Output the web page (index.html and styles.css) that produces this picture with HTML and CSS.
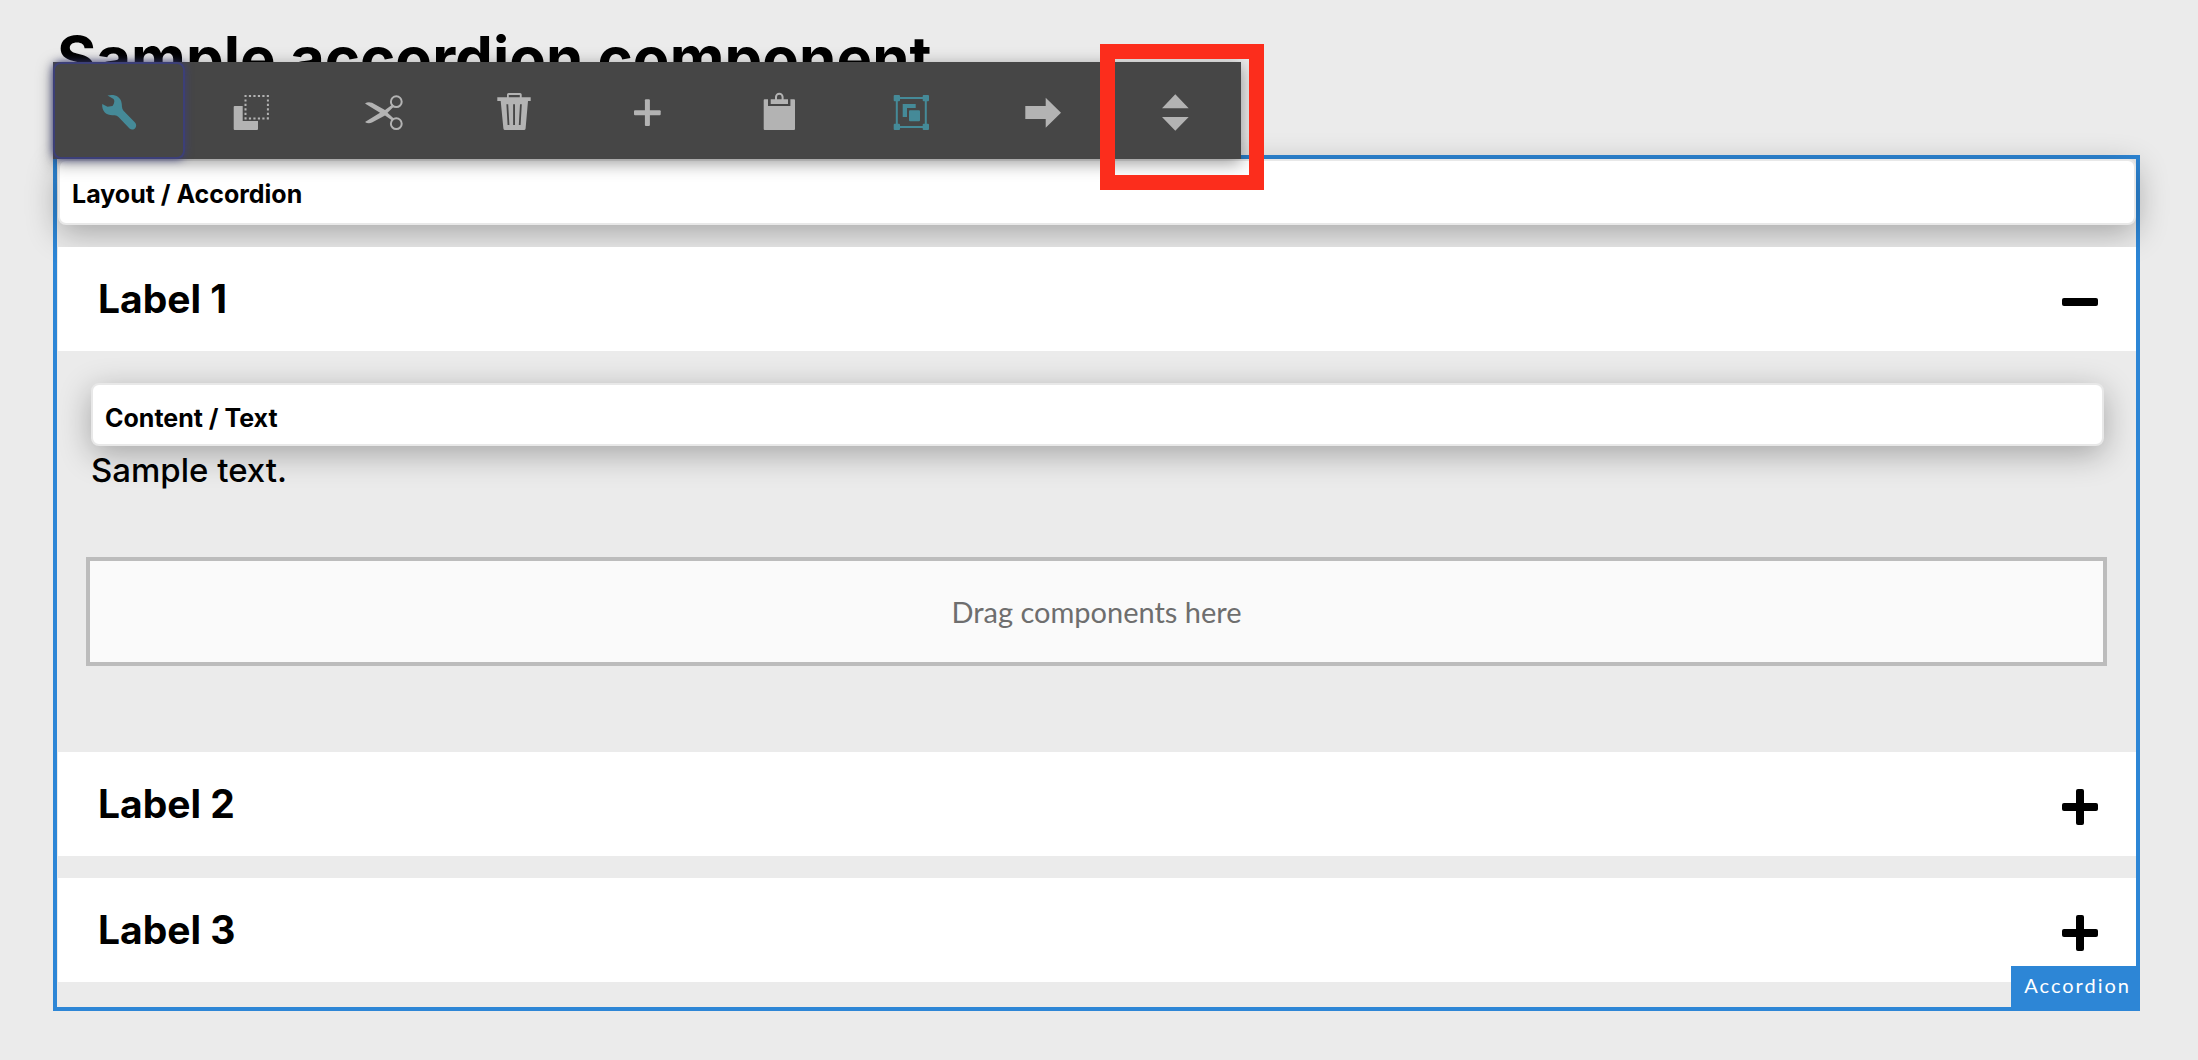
FILE: index.html
```html
<!DOCTYPE html>
<html lang="en">
<head>
  <meta charset="UTF-8">
  <meta name="viewport" content="width=device-width, initial-scale=1.0">
  <title>Accordion</title>
  <link rel="stylesheet" href="styles.css">
</head>
<body>
  <main class="page">
    <h1 class="page-title">Sample accordion component</h1>

    <section class="component">
      <div class="toolbar" role="toolbar" aria-label="Component actions">
        <button type="button" class="tool active" aria-label="Configure">
          <svg viewBox="0 0 40 40"><path d="M8.5 3.6C15 2 21.5 4 22.7 11.5L23 15Q23.2 17.3 24.5 18.7L36 30.5C39.5 34.5 34.5 40 30.5 36.5L19.5 25Q17.5 22.8 15 23.2C8.5 24 2.5 20 3.2 12L8.5 14.8 13.5 14Q16.5 9.5 14.6 7Z"/></svg>
        </button>
        <button type="button" class="tool" aria-label="Copy">
          <svg viewBox="0 0 40 40"><path d="M3.7 14H11.7V29H27V37A1 1 0 0 1 26 38H3.7A1 1 0 0 1 2.7 37V15A1 1 0 0 1 3.7 14Z"/><rect class="line" x="14.5" y="4" width="22.4" height="22.4" stroke-dasharray="2.2 2.28" stroke-dashoffset="1.1"/></svg>
        </button>
        <button type="button" class="tool" aria-label="Cut">
          <svg viewBox="0 0 40 40"><path d="M2 11.5Q5 9.3 9 10.8L22 18 29.5 12.6 31 14.6 24.5 20.7 31 26.8 29.5 28.8 22 23.4 9 30.6Q5 32 2 30L17 20.7Z"/><circle class="line" cx="33.3" cy="9.7" r="5.4"/><circle class="line" cx="33.3" cy="31.7" r="5.4"/></svg>
        </button>
        <button type="button" class="tool" aria-label="Delete">
          <svg viewBox="0 0 40 40"><path fill-rule="evenodd" d="M12 5.3V2.5Q12 1 13.5 1H25Q26.7 1 26.7 2.5V5.3H35.7V9H33L30.6 36.5Q30.4 38 29 38H10Q8.6 38 8.4 36.5L5.7 9H2.3V5.3ZM13.8 5.3H24.8V3H13.8ZM11.4 12.3 12.6 33H14.4L13.2 12.3ZM18.1 12.3V33H20V12.3ZM25 12.3 23.8 33H25.6L26.8 12.3Z"/></svg>
        </button>
        <button type="button" class="tool" aria-label="Insert">
          <svg viewBox="0 0 40 40"><rect x="7" y="18.2" width="26.7" height="5" rx="1"/><rect x="17.9" y="7.3" width="5" height="26.7" rx="1"/></svg>
        </button>
        <button type="button" class="tool" aria-label="Paste">
          <svg viewBox="0 0 40 40"><path d="M5.7 7.3H9V14H31.4V7.3H35A1 1 0 0 1 36 8.3V37A1 1 0 0 1 35 38H5.7A1 1 0 0 1 4.7 37V8.3A1 1 0 0 1 5.7 7.3Z"/><path fill-rule="evenodd" d="M11.7 7.3H16V5A4.3 4.3 0 0 1 24.6 5V7.3H29V12H11.7ZM18 7.3H22.6V5A2.3 2.3 0 0 0 18 5Z"/></svg>
        </button>
        <button type="button" class="tool accent" aria-label="Group">
          <svg viewBox="0 0 40 40"><rect class="line" x="5.8" y="6" width="29" height="29"/><rect x="2.7" y="3" width="6.3" height="6.3" rx="1"/><rect x="31.7" y="3" width="6.3" height="6.3" rx="1"/><rect x="2.7" y="31.7" width="6.3" height="6.3" rx="1"/><rect x="31.7" y="31.7" width="6.3" height="6.3" rx="1"/><path d="M11.7 12H24.7V16H16V25H11.7Z"/><rect x="18" y="18.3" width="11" height="11" rx="1"/></svg>
        </button>
        <button type="button" class="tool" aria-label="Parent">
          <svg viewBox="0 0 40 40"><path d="M2.3 14H22.7V5.7L38 20.7 22.7 35.7V27H2.3Z"/></svg>
        </button>
        <button type="button" class="tool marked" aria-label="Select panel">
          <svg viewBox="0 0 40 40"><path d="M20.3 2.3 33.7 16.3H7ZM7 25H33.7L20.3 38.7Z"/></svg>
        </button>
      </div>

      <div class="component-bar">Layout / Accordion</div>

      <div class="item">
        <button type="button" class="item-header" aria-expanded="true" aria-controls="panel1">
          <span>Label 1</span>
          <svg viewBox="0 0 36 36"><rect y="14" width="36" height="8" rx="2"/></svg>
        </button>
        <div class="panel" id="panel1">
          <div class="component-bar">Content / Text</div>
          <p class="panel-text">Sample text.</p>
          <div class="dropzone">Drag components here</div>
        </div>
      </div>
      <div class="item">
        <button type="button" class="item-header" aria-expanded="false">
          <span>Label 2</span>
          <svg viewBox="0 0 36 36"><rect y="14" width="36" height="8" rx="2"/><rect x="14" width="8" height="36" rx="2"/></svg>
        </button>
      </div>
      <div class="item">
        <button type="button" class="item-header" aria-expanded="false">
          <span>Label 3</span>
          <svg viewBox="0 0 36 36"><rect y="14" width="36" height="8" rx="2"/><rect x="14" width="8" height="36" rx="2"/></svg>
        </button>
      </div>

      <span class="component-tag">Accordion</span>
    </section>
  </main>
</body>
</html>
```

FILE: styles.css
```css
* {
  margin: 0;
  padding: 0;
  box-sizing: border-box;
}

body {
  background-color: #ebebeb;
  color: #000;
  font-family: Inter, "Liberation Sans", sans-serif;
}

button {
  border: none;
  background: none;
  font: inherit;
  color: inherit;
  cursor: pointer;
}

.page {
  padding: 22px 58px 40px 53px;
}

.page-title {
  padding-left: 4px;
  margin-bottom: 61px;
  font-size: 60px;
  line-height: 72px;
  font-weight: 700;
}

.component {
  position: relative;
  border: 4px solid #2d86d6;
  padding: 0 0 25px 1px;
}

/* action bar, sits on top of the component frame */
.toolbar {
  position: absolute;
  left: -4px;
  bottom: 100%;
  z-index: 2;
  display: flex;
  background-color: #464646;
  box-shadow: 0 4px 16px rgba(0, 0, 0, 0.4);
}

.tool {
  position: relative;
  width: 132px;
  height: 97px;
  padding-top: 2px;
  color: #b3b3b3;
}

.tool svg {
  display: block;
  width: 40px;
  height: 40px;
  margin: 0 auto;
  fill: currentColor;
}

.tool .line {
  fill: none;
  stroke: currentColor;
  stroke-width: 2;
}

.tool.active,
.tool.accent {
  color: #458a98;
}

.tool.active {
  border-radius: 8px;
  box-shadow: inset 0 0 0 2px #3c3f78, 0 0 8px #3c3f78;
}

.tool.marked::after {
  content: "";
  position: absolute;
  top: -18px;
  left: -9px;
  box-sizing: border-box;
  width: 164px;
  height: 146px;
  border: 15px solid #fc2d1c;
}

.component-bar {
  padding: 17px 12px 13px;
  border: 2px solid #e8e8e8;
  border-radius: 8px;
  background-color: #fff;
  box-shadow: 0 8px 32px rgba(0, 0, 0, 0.3);
  font-size: 25px;
  line-height: 32px;
  font-weight: 700;
}

.item {
  margin-top: 22px;
}

.item-header {
  display: flex;
  justify-content: space-between;
  align-items: center;
  width: 100%;
  padding: 30px 38px 30px 40px;
  background-color: #fff;
  font-size: 39px;
  line-height: 44px;
  font-weight: 700;
}

.item-header svg {
  width: 36px;
  height: 36px;
  margin-top: 5px;
}

.panel {
  padding: 32px 29px 64px 28px;
}

.panel .component-bar {
  margin: 0 3px 0 5px;
  padding-bottom: 10px;
}

.panel-text {
  position: relative;
  padding-left: 5px;
  font-size: 33px;
  line-height: 48px;
  font-weight: 500;
}

.dropzone {
  margin-top: 63px;
  padding: 32px;
  border: 4px solid #bcbcbc;
  background-color: #fafafa;
  color: #6e6e6e;
  font-family: Lato, sans-serif;
  font-size: 29px;
  line-height: 37px;
  text-align: center;
}

.component-tag {
  position: absolute;
  right: -4px;
  bottom: -4px;
  padding: 7px 9px 14px 13px;
  background-color: #2d86d6;
  color: #fff;
  font-family: Lato, sans-serif;
  font-size: 20px;
  line-height: 24px;
  letter-spacing: 2px;
}
```
